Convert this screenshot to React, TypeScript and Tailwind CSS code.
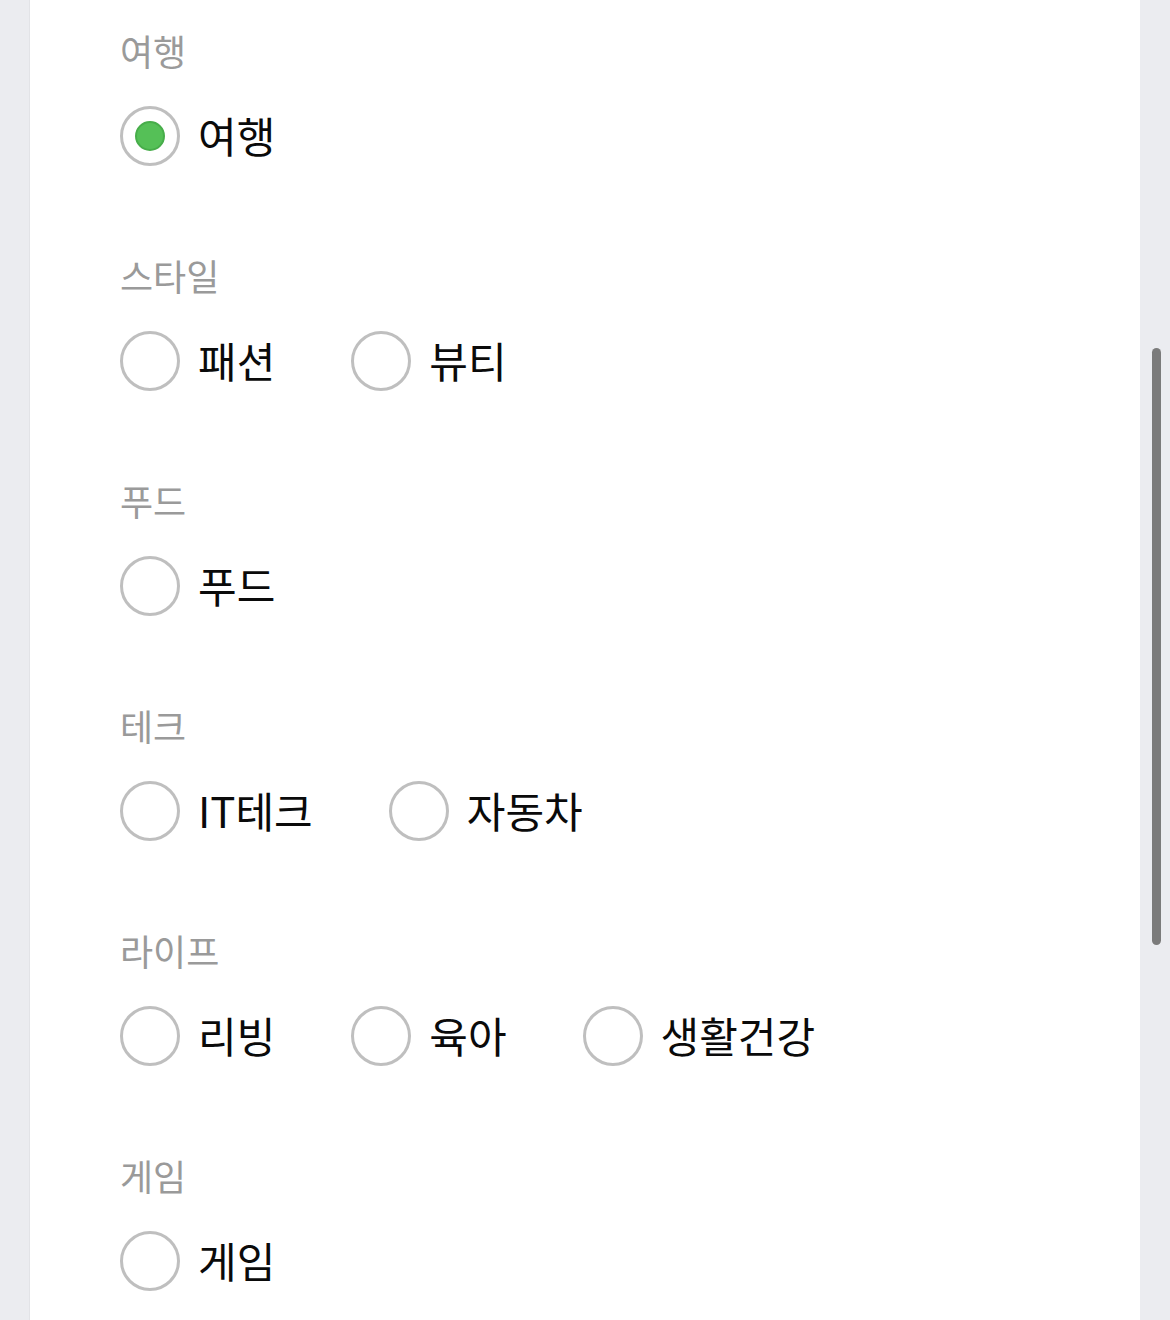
import React from 'react';

const font = { fontFamily: '"Noto Sans CJK KR", "Noto Sans", sans-serif' };

const sections = [
  { title: '여행', options: ['여행'] },
  { title: '스타일', options: ['패션', '뷰티'] },
  { title: '푸드', options: ['푸드'] },
  { title: '테크', options: ['IT테크', '자동차'] },
  { title: '라이프', options: ['리빙', '육아', '생활건강'] },
  { title: '게임', options: ['게임'] },
];

const Radio = ({ checked }: { checked: boolean }) => (
  <span className="w-[60px] h-[60px] rounded-full border-[3px] border-[#bfbfbf] bg-white flex items-center justify-center shrink-0">
    {checked && (
      <span className="w-[30px] h-[30px] rounded-full bg-[#55c057] border-2 border-[#47ad4a]" />
    )}
  </span>
);

const App = () => {
  const selected = '여행';

  return (
    <div className="w-[1170px] h-[1320px] overflow-hidden bg-[#ebecf0] flex" style={font}>
      <div className="w-[30px] shrink-0 border-r border-[#e2e3e7]" />
      <div className="w-[1110px] bg-white pl-[90px] pt-[25px]">
        {sections.map((section) => (
          <div key={section.title} className="pb-[84px]">
            <div className="h-[50px] flex items-center text-[36px] text-[#9a9a9a] leading-none">
              {section.title}
            </div>
            <div className="mt-[31px] h-[60px] flex items-center gap-[76px]">
              {section.options.map((opt) => (
                <label key={opt} className="flex items-center gap-[18px]">
                  <Radio checked={opt === selected} />
                  <span className="text-[42px] text-[#0a0a0a] leading-none pb-[2px]">{opt}</span>
                </label>
              ))}
            </div>
          </div>
        ))}
      </div>
      <div className="w-[30px] shrink-0 pt-[348px] pl-[12px]">
        <div className="w-[9px] h-[597px] rounded-full bg-[#7b7b7b]" />
      </div>
    </div>
  );
};

export default App;
